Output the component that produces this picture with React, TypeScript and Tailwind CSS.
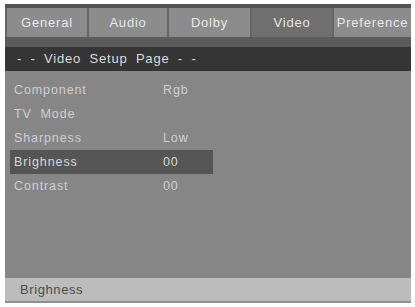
import React from "react";

const tabs = [
  { label: "General", w: "w-[80px]", active: false },
  { label: "Audio", w: "w-[78px]", active: false },
  { label: "Dolby", w: "w-[81px]", active: false },
  { label: "Video", w: "w-[80px]", active: true },
  { label: "Preference", w: "flex-1", active: false },
];

const rows = [
  { label: "Component", value: "Rgb", hl: false },
  { label: "TV  Mode", value: "", hl: false },
  { label: "Sharpness", value: "Low", hl: false },
  { label: "Brighness", value: "00", hl: true },
  { label: "Contrast", value: "00", hl: false },
];

export default function App() {
  return (
    <div
      className="w-[415px] h-[307px] bg-white pt-[4px] pb-[4px] pl-[5px] pr-[4px] flex"
      style={{ fontFamily: '"Liberation Sans", Arial, sans-serif' }}
    >
      <div className="flex-1 flex flex-col bg-[#5e5e5e]">
        <div className="h-[4px] bg-[#545454]" />
        <div className="h-[29px] flex gap-[2px] pl-[2px] bg-[#666666]">
          {tabs.map((t) => (
            <div
              key={t.label}
              className={`${t.w} flex items-center justify-center text-[13px] tracking-[0.8px] ${
                t.active ? "bg-[#6f6f6f] text-[#e4e4e4]" : "bg-[#8c8c8c] text-[#e8e8e8]"
              }`}
            >
              {t.label}
            </div>
          ))}
        </div>
        <div className="h-[10px] bg-[#5c5c5c]" />
        <div className="h-[24px] bg-[#353535] flex items-center pl-[12px] text-[13px] text-[#dcdcdc] tracking-[0.8px] [word-spacing:4px]">
          - - Video Setup Page - -
        </div>
        <div className="flex-1 bg-[#868686] pt-[7px] pl-[5px] flex flex-col">
          {rows.map((r) => (
            <div
              key={r.label}
              className={`h-[24px] w-[203px] flex items-center pl-[4px] text-[12.5px] tracking-[0.9px] text-[#cfcfcf] ${
                r.hl ? "bg-[#555555] text-[#d8d8d8]" : ""
              }`}
            >
              <span className="w-[149px] whitespace-pre">{r.label}</span>
              <span>{r.value}</span>
            </div>
          ))}
        </div>
        <div className="h-[25px] bg-[#bcbcbc] flex items-center pl-[15px] text-[13px] text-[#4a4a4a] tracking-[0.6px] border-b-[2px] border-[#8f8f8f]">
          Brighness
        </div>
      </div>
    </div>
  );
}
